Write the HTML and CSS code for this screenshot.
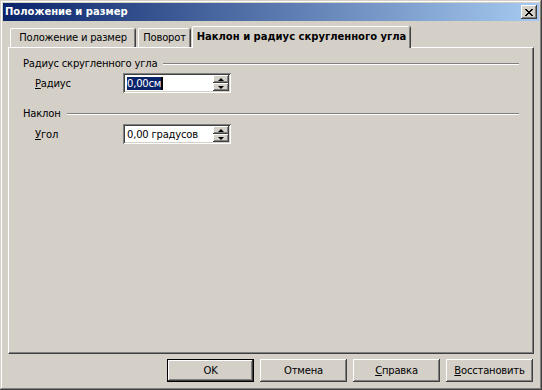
FILE: index.html
```html
<!DOCTYPE html>
<html lang="ru">
<head>
    <meta charset="UTF-8">
    <title>Положение и размер</title>
    <link rel="stylesheet" href="styles.css">
</head>
<body>
    <div class="window">
        <div class="titlebar">
            <span class="title">Положение и размер</span>
            <div class="close-btn">
                <svg width="8" height="7" viewBox="0 0 8 7">
                    <path d="M0 0h2v1h1v1h2v-1h1v-1h2v1h-1v1h-1v1h-1v1h1v1h1v1h1v1h-2v-1h-1v-1h-2v1h-1v1h-2v-1h1v-1h1v-1h1v-1h-1v-1h-1v-1h-1z" fill="#000"/>
                </svg>
            </div>
        </div>

        <div class="tabs">
            <div class="tab tab-pos">Положение и размер</div>
            <div class="tab tab-rot">Поворот</div>
            <div class="tab tab-slant active">Наклон и радиус скругленного угла</div>
        </div>

        <div class="panel">
            <div class="group-head">
                <span>Радиус скругленного угла</span>
                <div class="groove"></div>
            </div>
            <div class="field-row">
                <label class="field-label"><u>Р</u>адиус</label>
                <div class="spin">
                    <div class="spin-text"><span class="selected">0,00см</span><span class="caret"></span></div>
                    <div class="spin-btns">
                        <div class="spin-btn"><span class="arrow-up"></span></div>
                        <div class="spin-btn"><span class="arrow-down"></span></div>
                    </div>
                </div>
            </div>

            <div class="group-head second">
                <span>Наклон</span>
                <div class="groove"></div>
            </div>
            <div class="field-row row-angle">
                <label class="field-label"><u>У</u>гол</label>
                <div class="spin">
                    <div class="spin-text">0,00 градусов</div>
                    <div class="spin-btns">
                        <div class="spin-btn"><span class="arrow-up"></span></div>
                        <div class="spin-btn"><span class="arrow-down"></span></div>
                    </div>
                </div>
            </div>
        </div>

        <div class="buttons">
            <div class="btn btn-default">OK</div>
            <div class="btn">Отмена</div>
            <div class="btn"><u>С</u>правка</div>
            <div class="btn"><u>В</u>осстановить</div>
        </div>
    </div>
</body>
</html>
```

FILE: styles.css
```css
body {
    margin: 0;
    background-color: #d4d0c8;
    font-family: 'DejaVu Sans', Verdana, sans-serif;
    font-size: 10px;
    letter-spacing: -0.2px;
    color: #000;
}

u {
    text-decoration: underline;
    text-underline-offset: 1px;
}

.window {
    width: 542px;
    height: 390px;
    box-sizing: border-box;
    padding: 3px;
    background-color: #d4d0c8;
    box-shadow: inset -1px -1px #404040, inset 1px 1px #d4d0c8,
                inset -2px -2px #808080, inset 2px 2px #fff;
}

.titlebar {
    height: 18px;
    display: flex;
    align-items: center;
    justify-content: space-between;
    padding: 0 2px 0 2px;
    background: linear-gradient(to right, #0a246a, #a6caf0);
}

.title {
    color: #fff;
    font-weight: bold;
    letter-spacing: 0;
    line-height: 18px;
}

.close-btn {
    width: 16px;
    height: 14px;
    box-sizing: border-box;
    display: flex;
    align-items: center;
    justify-content: center;
    background-color: #d4d0c8;
    box-shadow: inset -1px -1px #404040, inset 1px 1px #fff,
                inset -2px -2px #808080;
}

.close-btn svg {
    display: block;
    margin: 0 1px 0 0;
}

/* tabs */
.tabs {
    display: flex;
    align-items: flex-end;
    height: 21px;
    margin-top: 5px;
    padding-left: 7px;
}

.tab {
    height: 19px;
    box-sizing: border-box;
    display: flex;
    align-items: center;
    justify-content: center;
    border-top: 1px solid #fff;
    border-left: 1px solid #fff;
    border-radius: 2px 2px 0 0;
    box-shadow: inset -1px 0 #808080, 1px 0 #404040;
    padding-bottom: 1px;
}

.tab-pos {
    width: 125px;
}

.tab-rot {
    width: 52px;
    margin-left: 3px;
}

.tab.active {
    position: relative;
    z-index: 1;
    width: 218px;
    height: 22px;
    margin-left: 2px;
    margin-bottom: -1px;
    font-weight: bold;
    letter-spacing: 0;
    background-color: #d4d0c8;
    padding-bottom: 3px;
}

/* panel */
.panel {
    width: 526px;
    height: 307px;
    box-sizing: border-box;
    margin-left: 5px;
    padding: 9px 14px 0 14px;
    border-top: 1px solid #fff;
    border-left: 1px solid #fff;
    border-right: 1px solid #404040;
    border-bottom: 1px solid #404040;
    box-shadow: inset -1px -1px #808080;
}

.group-head {
    display: flex;
    align-items: center;
    height: 13px;
    line-height: 13px;
}

.group-head.second {
    margin-top: 14px;
}

.groove {
    flex: 1;
    height: 0;
    margin-left: 6px;
    border-top: 1px solid #808080;
    border-bottom: 1px solid #fff;
}

.field-row {
    display: flex;
    align-items: center;
    margin-top: 3px;
    padding-left: 12px;
}

.row-angle {
    margin-top: 4px;
}

.field-label {
    width: 88px;
}

.spin {
    width: 108px;
    height: 20px;
    box-sizing: border-box;
    display: flex;
    padding: 2px;
    background-color: #fff;
    box-shadow: inset 1px 1px #808080, inset -1px -1px #fff,
                inset 2px 2px #404040, inset -2px -2px #d4d0c8;
}

.spin-text {
    flex: 1;
    display: flex;
    align-items: center;
    padding-left: 2px;
    line-height: 13px;
}

.selected {
    background-color: #0a246a;
    color: #fff;
}

.caret {
    width: 2px;
    height: 13px;
    background-color: #000;
}

.spin-btns {
    width: 16px;
    display: flex;
    flex-direction: column;
}

.spin-btn {
    flex: 1;
    display: flex;
    align-items: center;
    justify-content: center;
    background-color: #d4d0c8;
    box-shadow: inset -1px -1px #404040, inset 1px 1px #fff,
                inset -2px -2px #808080;
}

.arrow-up,
.arrow-down {
    width: 0;
    height: 0;
    border-left: 3px solid transparent;
    border-right: 3px solid transparent;
}

.arrow-up {
    border-bottom: 3px solid #000;
}

.arrow-down {
    border-top: 3px solid #000;
}

/* bottom buttons */
.buttons {
    display: flex;
    justify-content: flex-end;
    gap: 6px;
    margin-top: 5px;
    padding-right: 6px;
}

.btn {
    width: 87px;
    height: 23px;
    box-sizing: border-box;
    display: flex;
    align-items: center;
    justify-content: center;
    background-color: #d4d0c8;
    box-shadow: inset -1px -1px #404040, inset 1px 1px #fff,
                inset -2px -2px #808080;
}

.btn-default {
    box-shadow: inset 0 0 0 1px #000, inset -2px -2px #404040,
                inset 2px 2px #fff, inset -3px -3px #808080;
}
```
